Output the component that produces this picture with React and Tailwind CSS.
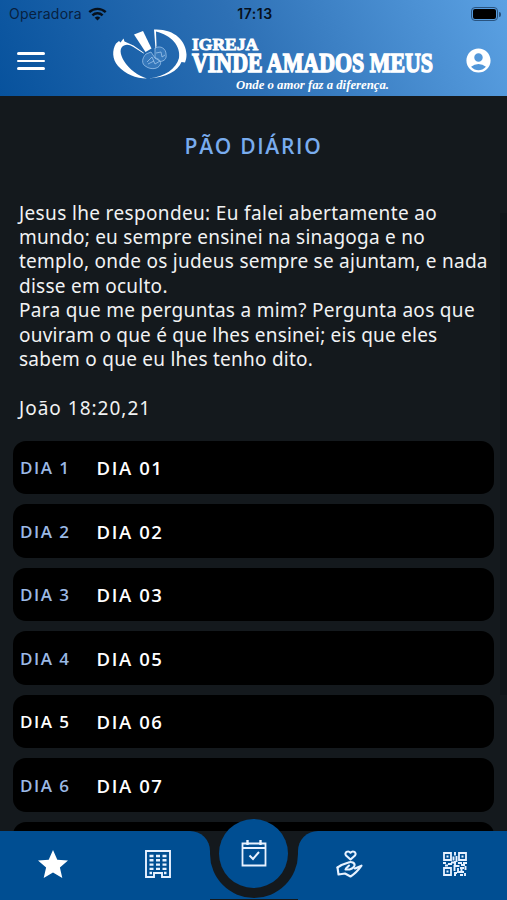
import React from 'react';
import { MdAccountCircle } from 'react-icons/md';

const verse = [
  { text: 'Jesus lhe respondeu: Eu falei abertamente ao', spacing: 'tracking-[0.35px]' },
  { text: 'mundo; eu sempre ensinei na sinagoga e no', spacing: 'tracking-[0.24px]' },
  { text: 'templo, onde os judeus sempre se ajuntam, e nada', spacing: 'tracking-[0.26px]' },
  { text: 'disse em oculto.', spacing: 'tracking-[0.26px]' },
  { text: 'Para que me perguntas a mim? Pergunta aos que', spacing: 'tracking-[0.32px]' },
  { text: 'ouviram o que é que lhes ensinei; eis que eles', spacing: 'tracking-[0.22px]' },
  { text: 'sabem o que eu lhes tenho dito.', spacing: 'tracking-[0.24px]' },
];

const days = [
  { id: 1, title: 'DIA 01' },
  { id: 2, title: 'DIA 02' },
  { id: 3, title: 'DIA 03' },
  { id: 4, title: 'DIA 05' },
  { id: 5, title: 'DIA 06', active: true },
  { id: 6, title: 'DIA 07' },
];

const StatusBar = () => (
  <div className="flex h-7 items-center justify-between pl-[9px] pr-[6px] font-['Inter',sans-serif] text-[#08213f]">
    <div className="flex w-[120px] items-center gap-[6px]">
      <span className="text-[14px] leading-none tracking-[0.25px]">Operadora</span>
      <svg width="19" height="14" viewBox="0 0 19 14" fill="none" stroke="#06101c" strokeWidth="2.4">
        <path d="M1.3 5.2a11.7 11.7 0 0 1 16.4 0" />
        <path d="M4.4 8.4a7.3 7.3 0 0 1 10.2 0" />
        <path d="M9.5 13.6 6.7 10.8a4 4 0 0 1 5.6 0z" fill="#06101c" stroke="none" />
      </svg>
    </div>
    <span className="text-[14px] font-semibold leading-none tracking-[0.5px] text-[#06101c]">17:13</span>
    <div className="flex w-[120px] items-center justify-end">
      <div className="h-[14px] w-[27px] rounded-[4px] border border-[#29537f] p-px">
        <div className="h-full w-full rounded-[2px] bg-black" />
      </div>
      <div className="ml-px h-[5px] w-[2px] rounded-r-full bg-[#29537f]" />
    </div>
  </div>
);

const Logo = () => (
  <svg width="324" height="68" viewBox="0 0 324 68" fill="#fff" className="overflow-visible font-['Liberation_Serif',serif]">
    <path d="M3 15.500C-1 22-1 31 5 38c7 8 18 12.500 29 12.500C25 48 16 41 11 33 7 26 6 20 11 17.500c3-1.500 6-.5 9 1.200l11 7-.5-1.200-10-7-9-4-1-3-3 4-1.500-1.500z" />
    <path d="M21 6.500l9-3.500 8.500 17.500-6 3.500z" />
    <path d="M41 1.500c20-1 32 11 32.500 25 0 3-.5 5.500-1.500 8l-3.500-.5C65 43 53 49.500 36 50.500 52 48.500 63 41 66 30 68 18 58 7 43 3.500L43.500 18l-1 3z" />
    <g fill="#5e9cd8" fillOpacity=".35" stroke="#a9cdf0" strokeWidth=".7">
      <path d="M33 26c-4 4-5 10 0 12.500 5 3.500 12 2.500 14-1.500 2-3-1-7-5-7l-4-6z" />
      <path d="M42 20c6-3 11 1 11 6 1 5-2 7-5.500 7.500L42 30z" />
      <path d="M34 34l5-5 3 7 5-3M43 25l5-1 1 5 3-2M35 36l6-3" fill="none" />
    </g>
    <g stroke="#fff" fontWeight="700">
      <text x="79" y="22" fontSize="17" strokeWidth=".9" textLength="66" lengthAdjust="spacingAndGlyphs">IGREJA</text>
      <text x="79" y="44" fontSize="28" strokeWidth="1.500" textLength="241" lengthAdjust="spacingAndGlyphs">VINDE AMADOS MEUS</text>
    </g>
    <text x="123" y="60.500" fontSize="13" fontWeight="700" fontStyle="italic" textLength="153" lengthAdjust="spacingAndGlyphs">Onde o amor faz a diferença.</text>
  </svg>
);

const Header = () => (
  <header className="h-24 shrink-0 bg-linear-[65deg] from-[#07529d] via-[#2d70b5] via-48% to-[#5ba1e3]">
    <StatusBar />
    <div className="flex h-[68px] items-start">
      <button className="ml-[17px] mt-6 flex w-7 flex-col gap-[5px]">
        <span className="h-[2.500px] rounded-full bg-white" />
        <span className="h-[2.500px] rounded-full bg-white" />
        <span className="h-[2.500px] rounded-full bg-white" />
      </button>
      <div className="ml-[68px]"><Logo /></div>
      <MdAccountCircle size={29} className="ml-[27px] mt-[18px] text-white" />
    </div>
  </header>
);

const StarIcon = () => (
  <svg width="30" height="28" viewBox="0 0 30 28" fill="#fff">
    <path d="M15 0l4.300 9.700L30 10.600l-8.100 7L24.300 28 15 22.500 5.700 28l2.400-10.400L0 10.600l10.700-.9z" />
  </svg>
);

const BuildingIcon = () => (
  <svg width="26" height="28" viewBox="0 0 26 28" fill="none" stroke="#e8f2ff" strokeWidth="1.900">
    <path d="M1 1h24v26h-8v-4h-8v4H1z" />
    <path d="M4.500 6h4M11 6h4M17.500 6h4M4.500 10.300h4M11 10.300h4M17.500 10.300h4M4.500 14.600h4M11 14.600h4M17.500 14.600h4M4.500 18.900h4M11 18.900h4M17.500 18.900h4M4.500 23h2.500M19 23h2.500" strokeWidth="2.400" />
  </svg>
);

const CalendarIcon = () => (
  <svg width="26" height="28" viewBox="0 0 26 28" fill="none" stroke="#e8f2ff" strokeWidth="1.800">
    <path d="M1.500 3.500h23v22h-23zM1.500 8h23" />
    <path d="M6.500 0v5M19.500 0v5" strokeWidth="2.400" />
    <path d="M8.500 15.500l3.500 3.500 6-7" strokeWidth="2" />
  </svg>
);

const GivingIcon = () => (
  <svg width="27" height="28" viewBox="0 0 27 28" fill="none" stroke="#e8f2ff" strokeWidth="2.100" strokeLinejoin="round" strokeLinecap="round">
    <path d="M14.500 9.500L10 5.500C8 2.500 12 0 14.500 2.700c2.500-2.700 6.500-.2 4.500 2.800z" />
    <path d="M1.500 17.500l4-2.500 7-2.500c3-1.500 6.500.5 6 3-.5 1.800-2.500 3.500-5 4H9.500" />
    <path d="M13 15.500l-3 3M19 18.500l6.500-2.800c-3 4.300-6 7.800-11 10.800l-5.500-3-6.500 1-1-7" />
  </svg>
);

const QrIcon = () => (
  <svg width="24" height="24" viewBox="0 0 24 24" fill="none" stroke="#e8f2ff" strokeWidth="1.800">
    <path d="M1 1h7v7H1zM16 1h7v7h-7zM1 16h7v7H1z" />
    <path d="M3.500 4.500h2M18.500 4.500h2M3.500 19.500h2M12 0v3.500M10.500 4.500v4M13.500 4v6M0 11h3M5 12h4M2 13.500h3M8 10.500h5M12 9v5M15 11h4M20 11h4M10.500 14h6M18 13h4M11.500 15v4M15 16v5M11 21h3M11 23h2M17 16h4M18.500 17v3M22.500 14v4M16 20h5M17 23h3M22 21v3" strokeWidth="1.900" />
  </svg>
);

const DayCard = ({ day }) => (
  <div className="flex h-[53.5px] shrink-0 items-center rounded-[13px] bg-black pl-[7px] pt-px font-['Open_Sans',sans-serif] font-semibold">
    <span className={`w-[76.5px] text-[17px] tracking-[1.5px] ${day.active ? 'text-white' : 'text-[#9bb9e5]'}`}>DIA {day.id}</span>
    <span className="text-[18.5px] tracking-[1.6px] text-white">{day.title}</span>
  </div>
);

const BottomNav = () => (
  <nav className="absolute inset-x-0 bottom-0 flex h-[69px] bg-[#14191d]">
    <div className="flex w-[210px] rounded-tr-[20px] bg-[#004e92]">
      <div className="ml-[38px] mt-[19px]"><StarIcon /></div>
      <div className="ml-[77px] mt-[19px]"><BuildingIcon /></div>
    </div>
    <div className="w-[88px] pt-[22px]">
      <div className="h-[47px] border-b border-[#14191d] bg-[#004e92]">
        <div className="h-[45px] rounded-b-[44px] bg-[#14191d]" />
      </div>
    </div>
    <div className="flex flex-1 rounded-tl-[20px] bg-[#004e92]">
      <div className="ml-[38px] mt-[19px]"><GivingIcon /></div>
      <div className="ml-[80px] mt-[21px]"><QrIcon /></div>
    </div>
    <button className="absolute -top-3 left-[219px] flex size-[69px] items-center justify-center rounded-full bg-[#004e92]">
      <CalendarIcon />
    </button>
  </nav>
);

export default function App() {
  return (
    <div className="relative flex h-[900px] w-[507px] flex-col overflow-hidden bg-[#14191d] font-['Noto_Sans',sans-serif]">
      <Header />
      <main className="flex flex-1 flex-col">
        <h1 className="mt-[35px] text-center font-['Open_Sans',sans-serif] text-[21px] font-semibold leading-[30px] tracking-[1.7px] text-[#79acee]">PÃO DIÁRIO</h1>
        <div className="mt-[39.5px] pl-[19px] text-[19px] leading-[24.4px] text-[#f1f2f3]">
          {verse.map((line) => (
            <p key={line.text} className={`whitespace-nowrap ${line.spacing}`}>{line.text}</p>
          ))}
          <p className="mt-[24.4px] tracking-[1px]">João 18:20,21</p>
        </div>
        <div className="mt-[20.5px] flex flex-col gap-[10px] px-[13px]">
          {days.map((day) => (
            <DayCard key={day.id} day={day} />
          ))}
          <div className="h-[53.5px] rounded-[13px] bg-black" />
        </div>
      </main>
      {/* Scroll position indicator */}
      <div className="absolute right-0 top-[213px] h-[482px] w-[7px] bg-[#101519]" />
      <BottomNav />
    </div>
  );
}
